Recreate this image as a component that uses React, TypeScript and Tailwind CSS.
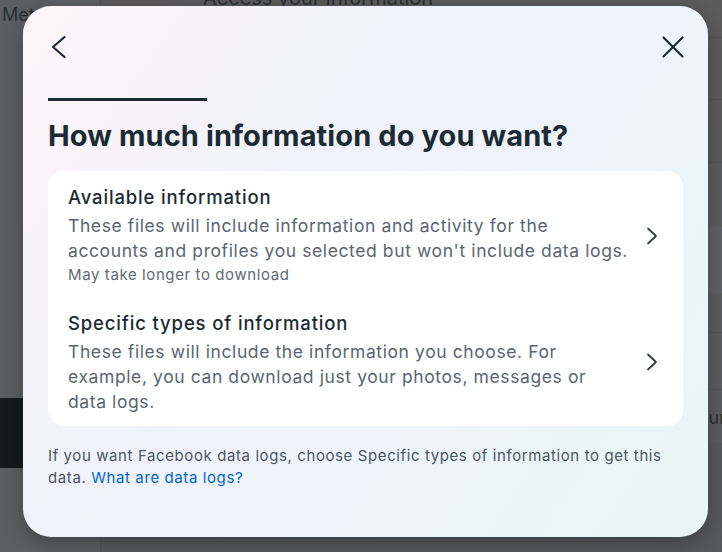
import React from 'react';

const Chevron: React.FC<{ dir: 'left' | 'right'; className?: string }> = ({ dir, className }) => (
  <svg viewBox="0 0 24 24" className={className} fill="none" stroke="currentColor" strokeLinecap="round" strokeLinejoin="round">
    {dir === 'left' ? <path d="M17.5 2 L6 12 L17.5 22" strokeWidth={2.2} /> : <path d="M9 4.5 L17 12 L9 19.5" strokeWidth={1.8} />}
  </svg>
);

const options = [
  {
    title: 'Available information',
    body: "These files will include information and activity for the\naccounts and profiles you selected but won't include data logs.",
    note: 'May take longer to download',
  },
  {
    title: 'Specific types of information',
    body: 'These files will include the information you choose. For\nexample, you can download just your photos, messages or\ndata logs.',
  },
];

const App: React.FC = () => {
  return (
    <div className="relative h-[552px] w-[722px] overflow-hidden bg-[#5c5e61] font-['Inter',sans-serif]">
      {/* dimmed page behind the dialog */}
      <div className="flex h-full">
        <div className="flex w-[101px] flex-col border-r border-[#535457] bg-[#5c5e61]">
          <span className="ml-[2px] mt-[4px] text-[18px] leading-[22px] text-[#2c2f33]">Meta</span>
          <div className="mt-[372px] h-[70px] w-[60px] bg-[#161a1f]" />
        </div>
        <div className="flex flex-1 flex-col">
          <div className="h-[38px] border-b border-[#545557] bg-[#5b5b5c]">
            <span className="ml-[102px] -mt-[14px] block text-[20px] leading-[24px] text-[#2c2f33]">Access your information</span>
          </div>
          <div className="h-[62px] border-b border-[#545557] bg-[#5b5b5c]" />
          <div className="h-[63px] border-b border-[#545557] bg-[#5b5b5c]" />
          <div className="h-[64px] bg-[#5b5c5d]" />
          <div className="h-[66px] bg-[#5d6064]" />
          <div className="h-[40px] border-b border-[#545557] bg-[#5b5c5d]" />
          <div className="h-[57px] border-b border-[#545557] bg-[#5b5c5d]" />
          <div className="flex h-[53px] justify-end bg-[#5a5c5e]">
            <span className="mr-[-4px] mt-[17px] text-[18px] leading-[22px] text-[#2c2f33]">your</span>
          </div>
          <div className="flex-1 bg-[#56585b]" />
        </div>
      </div>

      {/* dialog */}
      <div className="absolute inset-0 pl-[23px] pt-[6px]">
        <div className="flex h-[531px] w-[685px] flex-col rounded-[28px] bg-[linear-gradient(125deg,#fdf6f8_0%,#f1f2fb_35%,#eef4fc_60%,#e8f6f4_100%)] px-[25px] shadow-[0_6px_20px_rgba(0,0,0,0.28)]">
          <div className="mt-[29px] flex h-[24px] items-center justify-between">
            <button className="-ml-[1px] h-[24px] w-[24px] text-[#1c2b33]">
              <Chevron dir="left" className="h-[24px] w-[24px]" />
            </button>
            <button className="-mr-[2px] h-[24px] w-[24px] text-[#1c2b33]">
              <svg viewBox="0 0 24 24" className="h-[24px] w-[24px]" fill="none" stroke="currentColor" strokeWidth={2.2} strokeLinecap="round">
                <path d="M2.5 2.5 L21.5 21.5 M21.5 2.5 L2.5 21.5" />
              </svg>
            </button>
          </div>

          <div className="mt-[39px] h-[3px] w-[159px] bg-[#1c2b33]" />

          <h1 className="mt-[17px] text-[29px] font-bold leading-[36px] tracking-[0.1px] text-[#1c2b33]">
            How much information do you want?
          </h1>

          <div className="mt-[17px] flex flex-col rounded-[16px] bg-white py-[1px]">
            {options.map((o) => (
              <div key={o.title} className="flex items-center pb-[11px] pl-[20px] pr-[20px] pt-[12px]">
                <div className="flex-1 pr-[4px]">
                  <div className="text-[18.5px] font-medium leading-[26px] tracking-[0.85px] text-[#1c2b33]">{o.title}</div>
                  <p className="mt-[3px] whitespace-pre-line text-[17.5px] leading-[25px] tracking-[0.6px] text-[#5a6570]">{o.body}</p>
                  {o.note && <p className="text-[15px] leading-[24px] tracking-[0.6px] text-[#5f6a74]">{o.note}</p>}
                </div>
                <Chevron dir="right" className="h-[24px] w-[24px] text-[#2f3b44]" />
              </div>
            ))}
          </div>

          <p className="mt-[19px] text-[15px] leading-[22px] tracking-[0.6px] text-[#4b5661]">
            If you want Facebook data logs, choose Specific types of information to get this data.{' '}
            <a className="text-[#0064d1]">What are data logs?</a>
          </p>
        </div>
      </div>
    </div>
  );
};

export default App;
